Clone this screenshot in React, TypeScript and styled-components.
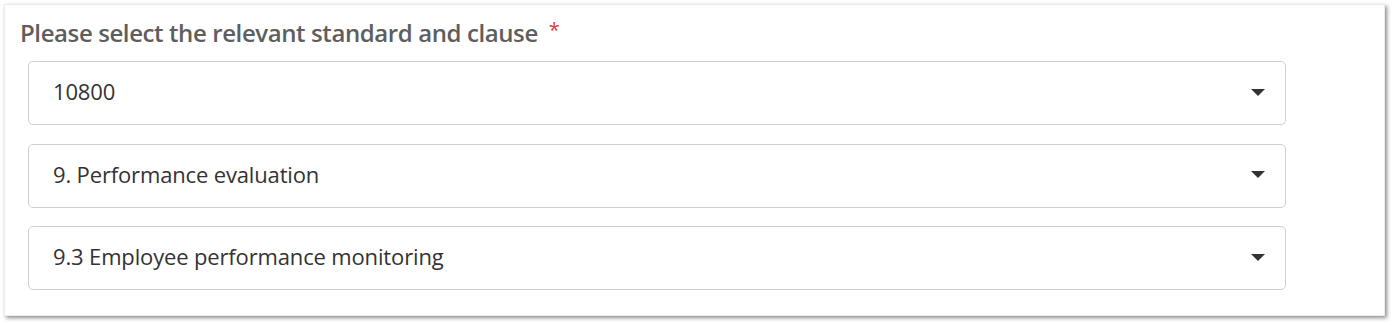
import React from "react";
import styled, { createGlobalStyle } from "styled-components";

const GlobalStyle = createGlobalStyle`
  html, body {
    margin: 0;
    padding: 0;
    background: #ffffff;
  }
  body {
    font-family: "Open Sans", "Noto Sans", sans-serif;
  }
`;

const Page = styled.div`
  padding: 4px 9px 9px 4px;
  width: 1394px;
  box-sizing: border-box;
`;

const Card = styled.div`
  width: 1381px;
  height: 312px;
  box-sizing: border-box;
  background: #fff;
  border: 1px solid #ececec;
  box-shadow: 2px 2px 4px rgba(0, 0, 0, 0.45);
  padding: 14px 0 0 15px;
  display: flex;
  flex-direction: column;
`;

const Title = styled.div`
  font-size: 24px;
  font-weight: 600;
  letter-spacing: -0.4px;
  color: #5e5e5e;
  line-height: 28px;
  display: flex;
  align-items: center;
  gap: 11px;
`;

const Required = styled.span`
  color: #d9403a;
  font-size: 20px;
  font-weight: 400;
  margin-top: -6px;
`;

const SelectList = styled.div`
  display: flex;
  flex-direction: column;
  gap: 18.5px;
  margin: 14px 0 0 8px;
`;

const SelectBox = styled.div`
  width: 1258px;
  height: 64px;
  box-sizing: border-box;
  border: 1px solid #cfcfcf;
  border-radius: 5px;
  display: flex;
  align-items: center;
  justify-content: space-between;
  padding: 0 20px 0 24px;
  font-size: 22px;
  letter-spacing: -0.15px;
  color: #333;
`;

const Value = styled.span`
  margin-top: -4px;
`;

const Caret = styled.span`
  width: 0;
  height: 0;
  margin-top: -2px;
  border-left: 7px solid transparent;
  border-right: 7px solid transparent;
  border-top: 7px solid #333;
`;

const values = ["10800", "9. Performance evaluation", "9.3 Employee performance monitoring"];

export default function App() {
  return (
    <>
      <GlobalStyle />
      <Page>
        <Card>
          <Title>
            Please select the relevant standard and clause
            <Required>*</Required>
          </Title>
          <SelectList>
            {values.map(v => (
              <SelectBox key={v}>
                <Value>{v}</Value>
                <Caret />
              </SelectBox>
            ))}
          </SelectList>
        </Card>
      </Page>
    </>
  );
}
